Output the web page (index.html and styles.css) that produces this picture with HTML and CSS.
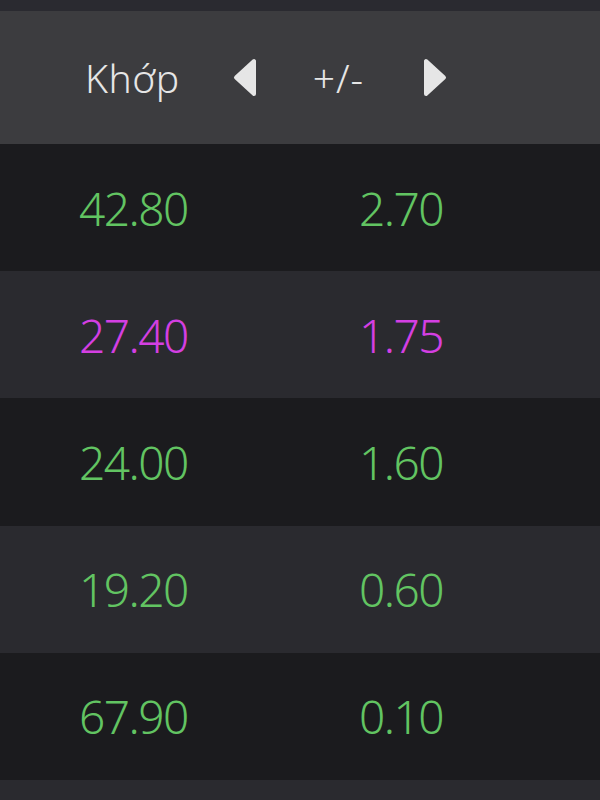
FILE: index.html
```html
<!DOCTYPE html>
<html lang="vi">
<head>
    <meta charset="UTF-8">
    <meta name="viewport" content="width=device-width, initial-scale=1.0">
    <title>Bảng giá</title>
    <link rel="stylesheet" href="styles.css">
</head>
<body>
    <div class="top-strip"></div>

    <div class="header">
        <span class="col-title">Khớp</span>
        <svg class="arrow" width="24" height="39" viewBox="0 0 24 39">
            <polygon points="21,3 21,36 3,19.5" />
        </svg>
        <span class="col-change">+/-</span>
        <svg class="arrow" width="24" height="39" viewBox="0 0 24 39">
            <polygon points="3,3 3,36 21,19.5" />
        </svg>
    </div>

    <div class="rows">
        <div class="row up">
            <span class="price">42.80</span>
            <span class="change">2.70</span>
        </div>
        <div class="row ceil">
            <span class="price">27.40</span>
            <span class="change">1.75</span>
        </div>
        <div class="row up">
            <span class="price">24.00</span>
            <span class="change">1.60</span>
        </div>
        <div class="row up">
            <span class="price">19.20</span>
            <span class="change">0.60</span>
        </div>
        <div class="row up">
            <span class="price">67.90</span>
            <span class="change">0.10</span>
        </div>
        <div class="row filler"></div>
    </div>
</body>
</html>
```

FILE: styles.css
```css
/* Bảng giá - cột Khớp / +/- */
body {
    margin: 0;
    background-color: #1b1b1e;
    font-family: "Noto Sans", "Open Sans", sans-serif;
    overflow: hidden;
}
.top-strip {
    height: 11px;
    background-color: #2a2a30;
}
.header {
    height: 133px;
    background-color: #3c3c3f;
    color: #e6e6e6;
    display: flex;
    align-items: center;
    padding-left: 85px;
    font-size: 39px;
    font-weight: 350;
}
.col-title {
    margin-right: 53px;
    letter-spacing: 0.5px;
}
.col-change {
    margin-left: 56px;
    margin-right: 59px;
    letter-spacing: 1px;
}
.arrow polygon {
    fill: #e6e6e6;
    stroke: #e6e6e6;
    stroke-width: 4;
    stroke-linejoin: round;
}
.row {
    height: 127.2px;
    display: flex;
    align-items: center;
    padding-left: 79px;
    font-size: 46px;
    font-weight: 350;
    letter-spacing: -1.5px;
}
.row:nth-child(even) {
    background-color: #2a2a2f;
}
.row.filler {
    height: 20px;
}
.price {
    width: 280px;
}
.up { color: #62c462; }
.ceil { color: #d43fe2; }
```
